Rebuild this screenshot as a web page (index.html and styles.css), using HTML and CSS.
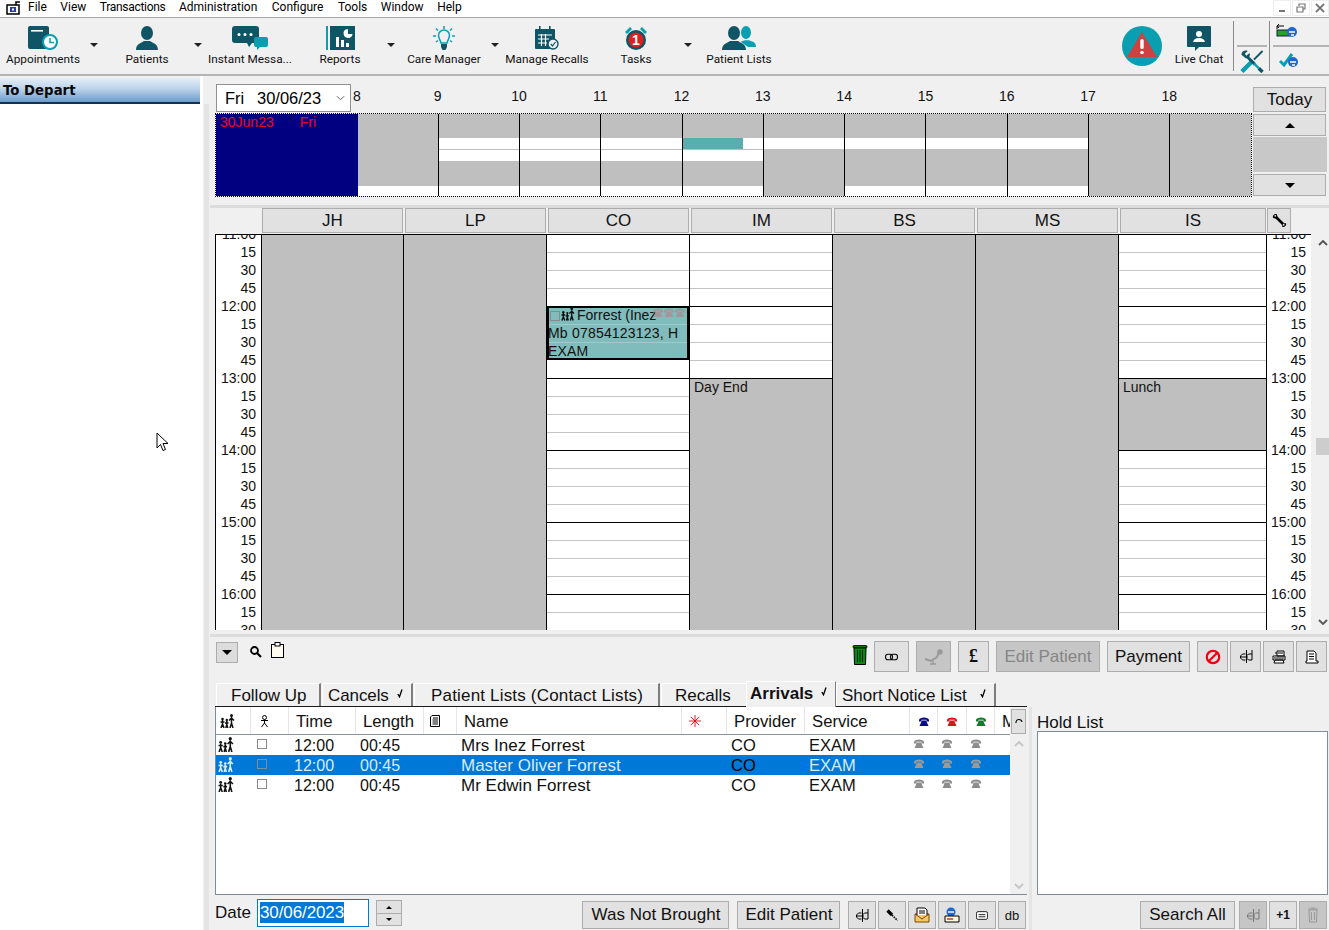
FILE: index.html
```html
<!DOCTYPE html>
<html lang="en">
<head>
<meta charset="utf-8">
<title>Appointments</title>
<link rel="stylesheet" href="styles.css">
</head>
<body>
<svg class="defs" width="0" height="0">
  <symbol id="family" viewBox="0 0 15 14">
    <g fill="currentColor" stroke="currentColor" stroke-width="1.500">
      <circle cx="2.500" cy="5" r="1.300" stroke="none"/><path d="M.5 8 4.500 8M2.500 6v4M1 14 2.500 10 4 14" fill="none"/>
      <circle cx="6.800" cy="6" r="1.200" stroke="none"/><path d="M5 9 8.500 9M6.800 7v3.500M5.800 14 6.800 10.500 7.800 14" fill="none"/>
      <circle cx="11.500" cy="1.500" r="1.500" stroke="none"/><path d="M9 6.500 11.500 4 14 6.500M11.500 3v6M10 14 11.500 9 13 14" fill="none"/>
    </g>
  </symbol>
  <symbol id="phone" viewBox="0 0 10 9">
    <path fill="currentColor" d="M0 3C0-.4 10-.4 10 3V4.500H7.500V2.800H2.500V4.500H0ZM3 3.500H7L9.500 9H.5Z"/>
  </symbol>
  <symbol id="split" viewBox="0 0 14 15">
    <path fill="none" stroke="#000" d="M7.500 1V14M1.500 8H7M6.500 5H3.500L1.500 7V9L3.500 11H6.500M13 1V11H9.500L8 9.500V6.500L9.500 5H13"/>
  </symbol>
  <symbol id="up" viewBox="0 0 10 6"><path fill="none" stroke="currentColor" stroke-width="1.800" d="M1 5 5 1 9 5"/></symbol>
  <symbol id="down" viewBox="0 0 10 6"><path fill="none" stroke="currentColor" stroke-width="1.800" d="M1 1 5 5 9 1"/></symbol>
  <symbol id="tick" viewBox="0 0 6 9"><path fill="none" stroke="#000" stroke-width="1.300" d="M.8 5 2.500 7.800 5 .5"/></symbol>
</svg>

<header class="menubar">
  <svg class="app-icon" viewBox="0 0 16 14" width="16" height="14"><path fill="none" stroke="#000" stroke-width="1.500" d="M2 13H14V4H2ZM11 4V1H15"/><rect x="5" y="6" width="6" height="5" fill="#2a3f9c"/><rect x="7" y="7.500" width="2" height="2" fill="#fff"/></svg>
  <nav class="menu">
    <span>File</span><span>View</span><span class="menu-narrow">Transactions</span><span>Administration</span><span class="menu-nudge">Configure</span><span class="menu-nudge">Tools</span><span>Window</span><span>Help</span>
  </nav>
  <div class="winctl">
    <span class="winbtn"><svg viewBox="0 0 10 10" width="10" height="10"><rect x="2" y="7" width="6" height="2" fill="#777"/></svg></span>
    <span class="winbtn"><svg viewBox="0 0 10 10" width="10" height="10"><path fill="none" stroke="#777" stroke-width="1.200" d="M1 4H7V9H1ZM3 3V1H9V6H7.500"/></svg></span>
    <span class="winbtn"><svg viewBox="0 0 10 10" width="10" height="10"><path fill="none" stroke="#777" stroke-width="1.800" d="M1 1 9 9M9 1 1 9"/></svg></span>
  </div>
</header>

<section class="toolbar">
  <div class="tool">
    <svg class="ti" viewBox="0 0 30 24" width="30" height="24"><rect width="21" height="23" rx="2" fill="#0f5566"/><rect x="3" y="4" width="12" height="1.600" fill="#fff"/><circle cx="22" cy="16" r="7" fill="#fff" stroke="#0a9fb0" stroke-width="2"/><path d="M22 12v4.500h4" fill="none" stroke="#0a9fb0" stroke-width="1.500"/></svg>
    <span>Appointments</span>
  </div>
  <i class="caret"></i>
  <div class="tool">
    <svg class="ti" viewBox="0 0 22 24" width="22" height="24"><ellipse cx="11" cy="7" rx="6" ry="7" fill="#0f5566"/><path d="M0 24C0 18 5 17 8 15H14C17 17 22 18 22 24Z" fill="#0f5566"/></svg>
    <span>Patients</span>
  </div>
  <i class="caret"></i>
  <div class="tool">
    <svg class="ti" viewBox="0 0 36 24" width="36" height="24"><path d="M3 0H24Q27 0 27 3V14Q27 17 24 17H20L17 21 15 17H3Q0 17 0 14V3Q0 0 3 0Z" fill="#0f5566"/><g fill="#fff"><circle cx="7" cy="8.500" r="1.500"/><circle cx="13" cy="8.500" r="1.500"/><circle cx="19" cy="8.500" r="1.500"/></g><path d="M24 11H34Q36 11 36 13V19Q36 21 34 21H28L25 24V21H24Q22 21 22 19V13Q22 11 24 11Z" fill="#0a9fb0"/></svg>
    <span>Instant Messa...</span>
  </div>
  <div class="tool">
    <svg class="ti" viewBox="0 0 29 24" width="29" height="24"><rect width="2" height="24" fill="#0a9fb0"/><rect x="4" width="25" height="24" fill="#0f5566"/><g fill="#fff"><rect x="10" y="11" width="3" height="10"/><rect x="15" y="14" width="3" height="7"/><rect x="20" y="17" width="3" height="4"/><path d="M21 3A4.500 4.500 0 1 0 26.500 8H22V3.500Z"/></g></svg>
    <span>Reports</span>
  </div>
  <i class="caret"></i>
  <div class="tool">
    <svg class="ti" viewBox="0 0 22 24" width="22" height="24"><g fill="none" stroke="#0a9fb0" stroke-width="1.500"><path d="M8 17C7 13 5.500 12.500 5.500 9.500A5.500 5.500 0 0 1 16.500 9.500C16.500 12.500 15 13 14 17Z"/><path d="M11 0V3M3 2.500 5 4.500M19 2.500 17 4.500M0 10H3M19 10H22M3 16 5 14.500M19 16 17 14.500"/></g><path d="M8 18H14V21L12.500 24H9.500L8 21Z" fill="#0f5566"/></svg>
    <span>Care Manager</span>
  </div>
  <i class="caret"></i>
  <div class="tool">
    <svg class="ti" viewBox="0 0 24 24" width="24" height="24"><rect y="3" width="20" height="20" rx="1" fill="#0f5566"/><rect x="4" y="0" width="1.600" height="5" fill="#0f5566"/><rect x="14" y="0" width="1.600" height="5" fill="#0f5566"/><path d="M3 9H17M3 13H14M3 17H12M6.500 8V20M10.500 8V20" stroke="#fff" stroke-width="1.200"/><circle cx="18" cy="18" r="5" fill="#f0f0f0" stroke="#0f5566" stroke-width="1.400"/><path d="M15.800 18 17.500 20 20.500 16" fill="none" stroke="#0f5566" stroke-width="1.200"/></svg>
    <span>Manage Recalls</span>
  </div>
  <div class="tool">
    <svg class="ti" viewBox="0 0 24 26" width="24" height="26"><path d="M1 6 6 1 8 3 3 8ZM23 6 18 1 16 3 21 8Z" fill="#0a9fb0"/><circle cx="12" cy="14" r="10" fill="#0f5566"/><circle cx="12" cy="14" r="7.500" fill="#e02020"/><text x="12" y="19" class="tnum">1</text></svg>
    <span>Tasks</span>
  </div>
  <i class="caret"></i>
  <div class="tool">
    <svg class="ti" viewBox="0 0 34 24" width="34" height="24"><ellipse cx="24" cy="6.500" rx="5" ry="6.500" fill="#0a9fb0"/><path d="M19 16C20 14 28 14 29 15 32 16 34 17 34 21H26Z" fill="#0a9fb0"/><ellipse cx="12" cy="7" rx="6" ry="7" fill="#0f5566"/><path d="M0 24C0 18 5 17 8 15H16C19 17 24 18 24 24Z" fill="#0f5566"/></svg>
    <span>Patient Lists</span>
  </div>
  <div class="tool-fill"></div>
  <svg class="alert" viewBox="0 0 40 40" width="40" height="40"><circle cx="20" cy="20" r="20" fill="#0a9fb0"/><path d="M20 6 35 31H5Z" fill="#cf4040"/><rect x="18.300" y="13" width="3.400" height="10" rx="1.500" fill="#fff"/><circle cx="20" cy="26.500" r="1.800" fill="#fff"/></svg>
  <div class="tool">
    <svg class="ti" viewBox="0 0 24 26" width="24" height="26"><path d="M1 0H23Q24 0 24 1V20Q24 21 23 21H12L8 25V21H1Q0 21 0 20V1Q0 0 1 0Z" fill="#0f5566"/><circle cx="12" cy="8" r="3" fill="#fff"/><path d="M6 16Q7 12 12 12T18 16Z" fill="#fff"/></svg>
    <span>Live Chat</span>
  </div>
  <div class="vrule"></div>
  <div class="toolstack">
    <div class="stack-slot"></div>
    <div class="stack-slot ruled">
      <svg viewBox="0 0 24 24" width="24" height="23"><path d="M23 1 14 10" stroke="#0f5566" stroke-width="2"/><path d="M1.500 22.500 13 11" stroke="#0a9fb0" stroke-width="4.500"/><path d="M1 5C1 1 5 0 7.500 1L4.500 4 6 6 9.500 3C10.500 6 8.500 9.500 5.500 8.500Z" fill="#0f5566"/><path d="M7 7 15 15" stroke="#0f5566" stroke-width="3"/><path d="M14 14 19 19" stroke="#0a9fb0" stroke-width="2.500"/><path d="M19 19 23 23" stroke="#0f5566" stroke-width="3.500"/></svg>
    </div>
  </div>
  <div class="vrule"></div>
  <div class="toolstack">
    <div class="stack-slot">
      <svg viewBox="0 0 22 15" width="22" height="15"><path d="M8 3H1M3 1 1 3 3 5M1 3V6" fill="none" stroke="#000"/><rect x="1" y="7" width="13" height="6" fill="#2f9a2f" stroke="#123"/><circle cx="16" cy="9" r="5" fill="#1f66d0"/><path d="M13 9H19M18 12H15" stroke="#fff" stroke-width="1.400"/></svg>
    </div>
    <div class="stack-slot ruled">
      <svg viewBox="0 0 20 16" width="20" height="16"><path d="M1 9 5 13 13 2" fill="none" stroke="#0a9fb0" stroke-width="3"/><circle cx="14" cy="10" r="5" fill="#1f66d0"/><path d="M11 10H17M16 13H13" stroke="#fff" stroke-width="1.400"/></svg>
    </div>
  </div>
</section>

<div class="workspace">
  <aside class="sidebar">
    <div class="side-head">To Depart</div>
  </aside>
  <div class="side-split"></div>

  <main class="main">
    <div class="head">
      <div>
        <div class="hours">
          <div class="combo"><span class="combo-day">Fri</span><span>30/06/23</span><svg class="combo-arrow" viewBox="0 0 10 6" width="9" height="6"><path d="M1 1 5 5 9 1" fill="none" stroke="#555"/></svg></div>
          <span class="hour first">8</span><span class="hour">9</span><span class="hour">10</span><span class="hour">11</span><span class="hour">12</span><span class="hour">13</span><span class="hour">14</span><span class="hour">15</span><span class="hour">16</span><span class="hour">17</span><span class="hour">18</span>
        </div>
        <div class="strip">
          <div class="strip-date"><span>30Jun23</span><span>Fri</span></div>
          <div class="sc closed-bottom-open"></div>
          <div class="sc line open-a"></div>
          <div class="sc line open-a"></div>
          <div class="sc line open-a"></div>
          <div class="sc line open-b"></div>
          <div class="sc line open-c"></div>
          <div class="sc line open-d"></div>
          <div class="sc line open-d"></div>
          <div class="sc line open-d"></div>
          <div class="sc line"></div>
          <div class="sc line"></div>
        </div>
      </div>
      <div class="navcol">
        <div class="btn today">Today</div>
        <div class="btn nav"><i class="tri-up"></i></div>
        <div class="navgap"></div>
        <div class="btn nav"><i class="tri-down"></i></div>
      </div>
    </div>

    <div class="hsep"></div>

    <div class="providers">
      <div class="btn prov">JH</div><div class="btn prov">LP</div><div class="btn prov">CO</div><div class="btn prov">IM</div><div class="btn prov">BS</div><div class="btn prov">MS</div><div class="btn prov prov-last">IS</div>
      <div class="btn prov-tool"><svg viewBox="0 0 16 16" width="15" height="15"><path d="M1 3 3 1 5 1 6 4 13 11 15 11 15 13 13 15 11 15 11 13 4 6 1 5Z" fill="#000"/><circle cx="3.500" cy="3" r="1" fill="#e1e1e1"/><circle cx="12.500" cy="12.500" r="1" fill="#e1e1e1"/></svg></div>
    </div>

    <div class="sched">
      <div class="sgrid">
        <div class="times left">
          <span>11:00</span><span>15</span><span>30</span><span>45</span><span>12:00</span><span>15</span><span>30</span><span>45</span><span>13:00</span><span>15</span><span>30</span><span>45</span><span>14:00</span><span>15</span><span>30</span><span>45</span><span>15:00</span><span>15</span><span>30</span><span>45</span><span>16:00</span><span>15</span><span>30</span>
        </div>
        <div class="col closed"></div>
        <div class="col closed"></div>
        <div class="col">
          <div class="seg h72"></div>
          <div class="apt">
            <div class="apt-row tight"><i class="chk"></i><svg class="apt-fam" width="14" height="14"><use href="#family"/></svg><span>Forrest (Inez</span>
              <span class="apt-ph"><svg width="10" height="9"><use href="#phone"/></svg><svg width="10" height="9"><use href="#phone"/></svg><svg width="10" height="9"><use href="#phone"/></svg></span>
            </div>
            <div class="apt-row">Mb 07854123123, H</div>
            <div class="apt-row">EXAM</div>
          </div>
          <div class="seg after-apt"></div>
          <div class="seg grow"></div>
        </div>
        <div class="col">
          <div class="seg h144"></div>
          <div class="block grow">Day End</div>
        </div>
        <div class="col closed"></div>
        <div class="col closed"></div>
        <div class="col">
          <div class="seg h144"></div>
          <div class="block h72">Lunch</div>
          <div class="seg grow"></div>
        </div>
        <div class="times right">
          <span>11:00</span><span>15</span><span>30</span><span>45</span><span>12:00</span><span>15</span><span>30</span><span>45</span><span>13:00</span><span>15</span><span>30</span><span>45</span><span>14:00</span><span>15</span><span>30</span><span>45</span><span>15:00</span><span>15</span><span>30</span><span>45</span><span>16:00</span><span>15</span><span>30</span>
        </div>
      </div>
      <div class="vscroll">
        <svg class="chev" width="10" height="6"><use href="#up"/></svg>
        <div class="thumb"></div>
        <svg class="chev chev-end" width="10" height="6"><use href="#down"/></svg>
      </div>
    </div>

    <div class="hsep lower-sep"></div>

    <div class="actions">
      <div class="btn dropbtn"><i class="tri-down"></i></div>
      <svg class="act-search" viewBox="0 0 12 12" width="12" height="12"><circle cx="4.500" cy="4.500" r="3.500" fill="none" stroke="#000" stroke-width="1.800"/><path d="M7 7 11 11" stroke="#000" stroke-width="2.200"/></svg>
      <svg class="act-clip" viewBox="0 0 13 16" width="13" height="16"><rect x=".5" y="2.500" width="12" height="13" fill="#fffdf0" stroke="#000"/><rect x="4" y=".5" width="5" height="3.500" fill="#fff" stroke="#000"/></svg>
      <div class="act-fill"></div>
      <svg class="act-trash" viewBox="0 0 16 21" width="16" height="21"><rect x="1" y="1.500" width="14" height="2.500" rx="1" fill="#0a7a0a" stroke="#000" stroke-width=".8"/><path d="M2 4H14L13.500 20.500H2.500Z" fill="#0a8a0a" stroke="#000"/><path d="M5.500 6V18M8 6V18M10.500 6V18" stroke="#023" stroke-width="1"/></svg>
      <div class="btn act w35"><svg viewBox="0 0 14 8" width="13" height="8"><g fill="none" stroke="#000" stroke-width="1.100"><rect x=".6" y="1" width="7.400" height="6" rx="2.500"/><rect x="6" y="1" width="7.400" height="6" rx="2.500"/></g></svg></div>
      <div class="btn act w35 off"><svg viewBox="0 0 20 16" width="20" height="16"><path d="M1 10 7 12 13 8 15 3" fill="none" stroke="#999" stroke-width="2"/><circle cx="16" cy="3" r="2.800" fill="#999"/><path d="M9 12V15M6 15H12" stroke="#999" stroke-width="1.300"/></svg></div>
      <div class="btn act w31 pound">£</div>
      <div class="btn act w104 off">Edit Patient</div>
      <div class="btn act w83">Payment</div>
      <div class="btn act w31 first-ico"><svg viewBox="0 0 16 16" width="16" height="16"><circle cx="8" cy="8" r="6.200" fill="none" stroke="#f00012" stroke-width="2.200"/><path d="M4 12 12 4" stroke="#f00012" stroke-width="2.200"/></svg></div>
      <div class="btn act w31 ico"><svg width="14" height="15"><use href="#split"/></svg></div>
      <div class="btn act w31 ico"><svg viewBox="0 0 14 14" width="14" height="14"><path d="M5 1H12V6H5ZM3 3H5M1 6H13V10H1ZM3 10H11L12 13H2Z" fill="#fff" stroke="#000"/><path d="M6 3H11M2 8H12" stroke="#000"/></svg></div>
      <div class="btn act w31 ico"><svg viewBox="0 0 14 14" width="14" height="14"><path d="M2 1H9L11 3V11H13V13H1V11H2ZM4 4H9M4 6.500H9M4 9H9" fill="#fff" stroke="#000"/></svg></div>
    </div>

    <div class="lower">
      <div class="lower-left">
        <div class="tabs">
          <div class="tab t1">Follow Up</div>
          <div class="tab t2">Cancels<svg class="tk" width="6" height="9"><use href="#tick"/></svg></div>
          <div class="tab t3">Patient Lists (Contact Lists)</div>
          <div class="tab t4">Recalls</div>
          <div class="tab t5 active">Arrivals<svg class="tk" width="6" height="9"><use href="#tick"/></svg></div>
          <div class="tab t6">Short Notice List<svg class="tk" width="6" height="9"><use href="#tick"/></svg></div>
        </div>
        <div class="table">
          <div class="tbody">
            <div class="cols thead">
              <div class="th"><svg width="15" height="14"><use href="#family"/></svg></div>
              <div class="th th-ico"><svg viewBox="0 0 9 12" width="9" height="12"><g fill="none" stroke="#000"><circle cx="4.500" cy="2.500" r="2"/><path d="M1 5.500H8M4.500 4.500V8M1.500 12 4.500 8 7.500 12"/></g></svg></div>
              <div class="th">Time</div>
              <div class="th">Length</div>
              <div class="th th-note"><svg viewBox="0 0 10 12" width="10" height="12"><path d="M2 .5H9.500V11.500H.5V2ZM3 3H8M2.500 5H8M2.500 7H8M2.500 9H8" fill="#fff" stroke="#000"/></svg></div>
              <div class="th">Name</div>
              <div class="th th-star"><svg viewBox="0 0 12 12" width="12" height="12"><path d="M6 0V12M0 6H12M1.800 1.800 10.200 10.200M1.800 10.200 10.200 1.800" stroke="#f00012" stroke-width=".9"/></svg></div>
              <div class="th">Provider</div>
              <div class="th">Service</div>
              <div class="th th-ph c-navy"><svg width="10" height="9"><use href="#phone"/></svg></div>
              <div class="th th-ph c-red"><svg width="10" height="9"><use href="#phone"/></svg></div>
              <div class="th th-ph c-green"><svg width="10" height="9"><use href="#phone"/></svg></div>
              <div class="th th-clip">M</div>
            </div>
            <div class="cols tr">
              <div class="td td-fam"><svg width="16" height="15"><use href="#family"/></svg></div>
              <div class="td td-chk"><i class="chk"></i></div>
              <div class="td td-time">12:00</div>
              <div class="td td-len">00:45</div>
              <div class="td"></div>
              <div class="td td-name">Mrs Inez Forrest</div>
              <div class="td"></div>
              <div class="td td-code">CO</div>
              <div class="td td-code">EXAM</div>
              <div class="td td-ph"><svg width="10" height="9"><use href="#phone"/></svg></div>
              <div class="td td-ph"><svg width="10" height="9"><use href="#phone"/></svg></div>
              <div class="td td-ph"><svg width="10" height="9"><use href="#phone"/></svg></div>
              <div class="td"></div>
            </div>
            <div class="cols tr selected">
              <div class="td td-fam"><svg width="16" height="15"><use href="#family"/></svg></div>
              <div class="td td-chk"><i class="chk"></i></div>
              <div class="td td-time">12:00</div>
              <div class="td td-len">00:45</div>
              <div class="td"></div>
              <div class="td td-name">Master Oliver Forrest</div>
              <div class="td"></div>
              <div class="td td-code dark">CO</div>
              <div class="td td-code">EXAM</div>
              <div class="td td-ph"><svg width="10" height="9"><use href="#phone"/></svg></div>
              <div class="td td-ph"><svg width="10" height="9"><use href="#phone"/></svg></div>
              <div class="td td-ph"><svg width="10" height="9"><use href="#phone"/></svg></div>
              <div class="td"></div>
            </div>
            <div class="cols tr">
              <div class="td td-fam"><svg width="16" height="15"><use href="#family"/></svg></div>
              <div class="td td-chk"><i class="chk"></i></div>
              <div class="td td-time">12:00</div>
              <div class="td td-len">00:45</div>
              <div class="td"></div>
              <div class="td td-name">Mr Edwin Forrest</div>
              <div class="td"></div>
              <div class="td td-code">CO</div>
              <div class="td td-code">EXAM</div>
              <div class="td td-ph"><svg width="10" height="9"><use href="#phone"/></svg></div>
              <div class="td td-ph"><svg width="10" height="9"><use href="#phone"/></svg></div>
              <div class="td td-ph"><svg width="10" height="9"><use href="#phone"/></svg></div>
              <div class="td"></div>
            </div>
          </div>
          <div class="tscroll">
            <div class="btn refresh"><svg viewBox="0 0 8 9" width="8" height="9"><path d="M1 6A3 3 0 1 1 7 5" fill="none" stroke="#000" stroke-width="1.100"/></svg></div>
            <svg class="tchev" width="10" height="6"><use href="#up"/></svg>
            <svg class="tchev tchev-end" width="10" height="6"><use href="#down"/></svg>
          </div>
        </div>
        <div class="bottom">
          <span class="date-label">Date</span>
          <div class="date-input"><span class="sel">30/06/2023</span></div>
          <div class="spin"><span><i class="tri-up small"></i></span><span><i class="tri-down small"></i></span></div>
          <div class="act-fill"></div>
          <div class="btn bb w147">Was Not Brought</div>
          <div class="btn bb w103">Edit Patient</div>
          <div class="btn bb sq"><svg width="14" height="15"><use href="#split"/></svg></div>
          <div class="btn bb sq"><svg viewBox="0 0 14 14" width="14" height="14"><path d="M2.500 2.500 7 7" stroke="#000" stroke-width="3.200"/><path d="M7 7 12.500 12.500" stroke="#000" stroke-width="1.600" stroke-dasharray="1.500 1"/></svg></div>
          <div class="btn bb sq"><svg viewBox="0 0 16 16" width="16" height="16"><path d="M1 7H15V15H1Z" fill="#f5c860" stroke="#7a4a00"/><path d="M3 8V1H11L13 3V8" fill="#fff" stroke="#000"/><path d="M5 4H11M5 6H11" stroke="#000"/><path d="M1 7 8 12 15 7" fill="none" stroke="#7a4a00"/></svg></div>
          <div class="btn bb sq"><svg viewBox="0 0 16 16" width="16" height="16"><circle cx="7" cy="5" r="4.500" fill="#1f66d0"/><path d="M4 5H10" stroke="#fff" stroke-width="1.400"/><path d="M1 9H15V15H1Z" fill="#fff6d8" stroke="#000"/><path d="M3 12H9" stroke="#d03030" stroke-width="1.500"/></svg></div>
          <div class="btn bb sq"><svg viewBox="0 0 14 10" width="12" height="9"><rect x=".5" y=".5" width="13" height="9" rx="2" fill="#fff" stroke="#000"/><path d="M3 4H11M3 6.500H11" stroke="#000"/></svg></div>
          <div class="btn bb sq small-txt">db</div>
        </div>
      </div>
      <div class="vsplit"></div>
      <div class="lower-right">
        <div class="hold-label">Hold List</div>
        <div class="hold-box"></div>
        <div class="bottom">
          <div class="act-fill"></div>
          <div class="btn bb w95">Search All</div>
          <div class="btn bb sq off"><svg class="faded" width="14" height="15"><use href="#split"/></svg></div>
          <div class="btn bb sq plus-txt">+1</div>
          <div class="btn bb sq off"><svg viewBox="0 0 12 16" width="12" height="16"><path d="M1 2H11M4 1H8M2 3H10L9.500 15H2.500Z" fill="none" stroke="#999"/><path d="M4.500 5V13M7.500 5V13" stroke="#999"/></svg></div>
        </div>
      </div>
    </div>
  </main>
</div>

<svg class="cursor" viewBox="0 0 13 20" width="13" height="20"><path d="M1 1V16L4.500 12.500 7 18.500 9.500 17.500 7 11.500H12Z" fill="#fff" stroke="#000"/></svg>
</body>
</html>
```

FILE: styles.css
```css
* { box-sizing: border-box; }
html, body { margin: 0; padding: 0; }
body {
  width: 1329px;
  height: 930px;
  overflow: hidden;
  position: relative;
  background: #f0f0f0;
  font-family: "Liberation Sans", Arial, sans-serif;
  font-size: 16px;
  color: #000;
}
.defs { position: absolute; }
i { display: block; }

/* menu */
.menubar {
  height: 18px;
  background: #fff;
  border-bottom: 1px solid #a8a8a8;
  display: flex;
  align-items: flex-start;
  font-family: Roboto, sans-serif;
  font-size: 12px;
  line-height: 14px;
}
.app-icon { margin: 1px 0 0 5px; flex: none; }
.menu { display: flex; gap: 13.500px; margin-left: 7px; }
.menu-narrow { letter-spacing: -.3px; }
.menu-nudge { margin-left: 1px; }
.winctl { margin-left: auto; display: flex; gap: 1px; height: 16px; }
.winbtn {
  width: 18px;
  height: 16px;
  border: 1px solid #eee;
  display: flex;
  align-items: center;
  justify-content: center;
}

/* main toolbar */
.toolbar {
  height: 58px;
  background: #f0f0f0;
  border-bottom: 2px solid #b4b4b4;
  display: grid;
  grid-template-columns: 86px 16px 90px 12px 92px 88px 14px 92px 10px 94px 84px 20px 82px 1fr 43px 68px 1px 35px 1px 59px;
  align-items: start;
  font-family: Roboto, sans-serif;
  font-size: 11.800px;
}
.tool {
  display: flex;
  flex-direction: column;
  align-items: center;
  height: 48px;
  padding-top: 8px;
  white-space: nowrap;
  color: #111;
}
.tool .ti { flex: none; }
.tool span { line-height: 14px; margin-top: auto; }
.caret {
  width: 0; height: 0;
  margin: 25px auto 0;
  border-left: 4px solid transparent;
  border-right: 4px solid transparent;
  border-top: 4px solid #222;
}
.alert { margin-top: 8px; }
.vrule { width: 1px; height: 50px; margin-top: 3px; background: #8a8a8a; }
.toolstack { display: flex; flex-direction: column; height: 54px; margin-top: 3px; }
.stack-slot { height: 24px; padding: 2px 0 0 6px; }
.stack-slot.ruled { border-top: 2px solid #b4b4b4; padding: 3px 0 0 3px; margin-left: 3px; height: 30px; margin-right: 2px; }
.toolstack:last-child .stack-slot.ruled { margin-right: 0; padding: 5px 0 0 6px; }

/* workspace */
.workspace { display: flex; height: 854px; }
.sidebar { width: 203px; background: #fff; flex: none; }
.side-head {
  width: 200px;
  height: 28px;
  border-top: 2px solid #f0f0f0;
  border-bottom: 2px solid #16324f;
  padding-left: 3px;
  background: linear-gradient(#e4eef7, #bcd3ea 45%, #6c9bcb);
  font-family: "DejaVu Sans", sans-serif;
  font-weight: bold;
  font-size: 13.300px;
  line-height: 26px;
  color: #0a0a0a;
}
.side-split {
  width: 7px;
  flex: none;
  margin-top: 28px;
  background: linear-gradient(90deg, #f0f0f0 1px, #e4e4e4 1px, #e4e4e4 6px, #f0f0f0 6px);
}
.main { width: 1119px; flex: none; }

/* day overview */
.head { display: flex; gap: 1px; margin: 8px 0 0 5px; }
.hours { display: flex; height: 29px; }
.combo {
  width: 135px;
  height: 28px;
  margin-left: 1px;
  border: 1px solid #909090;
  background: #fff;
  display: flex;
  align-items: center;
  padding-left: 8px;
  font-size: 16.500px;
  flex: none;
}
.combo-day { width: 32px; }
.combo-arrow { margin-left: 15px; }
.hour { width: 81.300px; text-align: center; font-size: 14px; line-height: 24px; flex: none; color: #111; }
.hour.first { width: 46px; text-align: left; padding-left: 2px; }
.strip {
  width: 1037px;
  height: 84px;
  border: 1px dotted #000;
  display: grid;
  grid-template-columns: 142px 80px 81px 81px 82px 81px 81px 81px 82px 81px 81px 82px;
}
.strip-date {
  background: #000080;
  color: #f00020;
  font-size: 14px;
  line-height: 16px;
  padding: 0 0 0 4px;
  display: flex;
  gap: 26px;
}
.sc { background: #bfbfbf; }
.sc.line { border-left: 1px solid #000; }
.closed-bottom-open { background: linear-gradient(#bfbfbf 72px, #fff 72px); }
.open-a { background: linear-gradient(#bfbfbf 24px, #fff 24px, #fff 35px, #bfbfbf 35px, #bfbfbf 36px, #fff 36px, #fff 47px, #bfbfbf 47px, #bfbfbf 72px, #fff 72px); }
.open-b { background: linear-gradient(#bfbfbf 24px, #5aaeb0 24px, #5aaeb0 35px, #bfbfbf 35px, #bfbfbf 36px, transparent 36px) 0 0 / 60px 100% no-repeat, linear-gradient(#bfbfbf 24px, #fff 24px, #fff 35px, #bfbfbf 35px, #bfbfbf 36px, #fff 36px, #fff 47px, #bfbfbf 47px, #bfbfbf 72px, #fff 72px); }
.open-c { background: linear-gradient(#bfbfbf 24px, #fff 24px, #fff 35px, #bfbfbf 35px); }
.open-d { background: linear-gradient(#bfbfbf 24px, #fff 24px, #fff 35px, #bfbfbf 35px, #bfbfbf 72px, #fff 72px); }

.navcol { width: 73px; padding-top: 3px; display: flex; flex-direction: column; }
.btn {
  background: #e1e1e1;
  border: 1px solid #adadad;
  display: flex;
  align-items: center;
  justify-content: center;
  flex: none;
  white-space: nowrap;
}
.today { height: 25px; font-size: 17px; color: #111; }
.nav { height: 22px; }
.navcol .btn:nth-child(2) { margin-top: 2px; }
.navgap { height: 35px; margin: 1px 0 2px; background: #c8c8c8; width: 74px; }
.tri-up, .tri-down {
  width: 0; height: 0;
  border-left: 5px solid transparent;
  border-right: 5px solid transparent;
}
.tri-up { border-bottom: 5px solid #000; }
.tri-down { border-top: 5px solid #000; }
.tri-up.small, .tri-down.small { border-left-width: 3px; border-right-width: 3px; }
.tri-up.small { border-bottom-width: 3px; }
.tri-down.small { border-top-width: 3px; }

.hsep { height: 3px; margin-top: 8px; background: #dcdcdc; }
.lower-sep { margin-top: 4px; }

/* provider headers */
.providers { display: flex; gap: 2px; height: 25px; margin: 0 0 1px 52px; }
.prov { width: 141px; height: 25px; font-size: 17px; color: #111; }
.prov-last { width: 146px; }
.prov-tool { width: 24px; height: 25px; margin-left: -1px; }

/* schedule */
.sched { display: flex; margin-left: 5px; height: 396px; }
.sgrid {
  width: 1096px;
  height: 396px;
  flex: none;
  display: grid;
  grid-template-columns: 46px 142px 143px 143px 143px 143px 143px 148px 45px;
  overflow: hidden;
}
.times {
  background: #fff;
  box-shadow: inset 0 1px #000;
  overflow: hidden;
  display: flex;
  flex-direction: column;
  align-items: flex-end;
  font-size: 14px;
  color: #111;
}
.times span { height: 18px; line-height: 18px; flex: none; position: relative; top: -9px; }
.times.left { border-left: 1px solid #000; padding-right: 5px; }
.times.right { border-left: 1px solid #000; padding-right: 5px; }
.col {
  border-left: 1px solid #000;
  display: flex;
  flex-direction: column;
  min-height: 0;
  overflow: hidden;
}
.col.closed { background: linear-gradient(#000 1px, #bfbfbf 1px); }
.seg {
  flex: none;
  background:
    linear-gradient(#000 1px, transparent 1px) 0 0 / 100% 72px,
    linear-gradient(#c4c4c4 1px, transparent 1px) 0 0 / 100% 18px,
    #fff;
}
.h72 { height: 72px; flex: none; }
.h144 { height: 144px; }
.grow { flex: 1; }
.after-apt { height: 18px; background: #fff; }
.block {
  background: linear-gradient(#000 1px, #bfbfbf 1px);
  font-size: 14px;
  line-height: 18px;
  padding-left: 4px;
  color: #111;
}
.apt {
  flex: none;
  height: 54px;
  border: 2px solid #000;
  background: #80bcbc;
  font-size: 14px;
  letter-spacing: .2px;
  line-height: 16px;
  color: #111;
  overflow: hidden;
}
.apt-row {
  height: 18px;
  margin-left: -1px;
  padding-bottom: 1px;
  border-bottom: 1px solid #9ccccc;
  white-space: nowrap;
  display: flex;
  align-items: center;
  position: relative;
}
.apt-row.tight { height: 17px; padding-bottom: 2px; letter-spacing: 0; }
.apt-row:last-child { border-bottom: 0; height: 17px; padding-bottom: 2px; }
.chk {
  width: 10px;
  height: 10px;
  border: 1px solid #8a8a8a;
  flex: none;
}
.apt .chk { margin: 1px 1px 0 2px; }
.apt-fam { margin: -3px 2px 0 0; flex: none; }
.apt-ph {
  position: absolute;
  right: 2px;
  top: 0;
  display: flex;
  gap: 1px;
  color: #9a9a9a;
}
.vscroll { width: 13px; margin-left: 5px; display: flex; flex-direction: column; align-items: center; background: #f0f0f0; }
.chev { margin-top: 6px; color: #555; flex: none; }
.thumb { width: 13px; height: 17px; background: #cdcdcd; margin-top: 192px; flex: none; }
.chev-end { margin-top: auto; margin-bottom: 5px; }

/* action row */
.actions { display: flex; align-items: flex-start; height: 31px; margin: 4px 0 0 6px; padding-right: 2px; }
.dropbtn { width: 22px; height: 21px; margin-top: 1px; background: #dcdcdc; }
.act-search { margin: 5px 0 0 12px; }
.act-clip { margin: 1px 0 0 9px; }
.act-fill { flex: 1; }
.act-trash { margin: 3px 6px 0 0; }
.act { height: 31px; margin-left: 7px; font-size: 17px; color: #111; }
.act-trash + .act { margin-left: 0; }
.w35 { width: 35px; }
.w31 { width: 31px; }
.w104 { width: 104px; }
.w83 { width: 83px; }
.ico { margin-left: 2px; }
.pound { font-family: "Liberation Serif", serif; font-weight: bold; font-size: 18px; }
.off { background: #c6c6c6; color: #858585; }

/* lower panels */
.lower { display: flex; margin: 11px 0 0 5px; }
.lower-left { width: 812px; flex: none; }
.lower-right { width: 291px; margin-left: 2px; flex: none; }
.vsplit { width: 8px; margin-top: 24px; background: linear-gradient(90deg, #f0f0f0 2px, #e4e4e4 2px, #e4e4e4 5px, #f0f0f0 5px); height: 223px; flex: none; }

.tabs {
  display: flex;
  height: 24px;
  padding-left: 1px;
  border-bottom: 1px solid #1a1a1a;
  font-size: 17px;
  color: #111;
}
.tab {
  height: 23px;
  background: #f0f0f0;
  border-top: 1px solid #fff;
  border-left: 1px solid #fff;
  border-right: 2px solid #7d7d7d;
  display: flex;
  align-items: center;
  white-space: nowrap;
  line-height: 23px;
  flex: none;
}
.t1 { width: 105px; margin-right: 1px; padding-left: 14px; }
.t2 { width: 91px; margin-right: 1px; padding-left: 5px; letter-spacing: -.1px; }
.t3 { width: 246px; margin-right: 1px; padding-left: 16px; letter-spacing: .18px; }
.t4 { width: 85px; padding-left: 13px; border-right: 0; }
.t5 { width: 90px; padding-left: 3px; }
.t6 { width: 160px; padding-left: 5px; }
.tk { margin-left: 8px; flex: none; margin-top: -4px; }
.t6 .tk { margin-left: 13px; }
.tab.active {
  height: 26px;
  margin-top: -2px;
  font-weight: bold;
  position: relative;
  align-items: flex-start;
  border-right-width: 1px;
  line-height: 24px;
}
.tab.active .tk { margin-top: 5px; }

.table {
  height: 188px;
  display: flex;
  border-left: 1px solid #7f8c99;
  border-bottom: 1px solid #7f8c99;
  background: #fff;
}
.tbody { width: 794px; flex: none; }
.cols {
  display: grid;
  grid-template-columns: 35px 38px 67px 68px 33px 225px 45px 78px 105px 28px 29px 28px 15px;
}
.thead {
  height: 28px;
  border-bottom: 1px solid #8a94a0;
  font-size: 16.700px;
  color: #111;
}
.th {
  border-right: 1px solid #e6e6e6;
  padding: 1px 0 0 7px;
  line-height: 27px;
  overflow: hidden;
  white-space: nowrap;
  display: flex;
  align-items: center;
}
.th:first-child { padding-left: 4px; }
.th-ico { padding-left: 9px; }
.th-note { padding-left: 6px; }
.th-star { padding-left: 7px; }
.th-ph { padding-left: 9px; }
.th-clip { border-right: 0; }
.c-navy { color: #0a0a8c; }
.c-red { color: #d81818; }
.c-green { color: #0a7d2a; }
.tr { height: 20px; color: #111; }
.td {
  height: 20px;
  line-height: 20px;
  font-size: 16.500px;
  white-space: nowrap;
  overflow: hidden;
  padding-left: 4px;
}
.td-fam { padding-left: 2px; }
.td-fam svg { margin-top: 2px; display: block; }
.td-chk { padding-left: 6px; }
.td-chk .chk { margin-top: 4px; }
.td-time { padding-left: 5px; font-size: 16px; line-height: 21px; }
.td-len { font-size: 16px; line-height: 21px; }
.td-name { font-size: 17px; line-height: 21px; }
.td-ph { color: #8c8c8c; }
.td-ph svg { display: block; margin-top: 4px; }
.selected { background: #0078d7; color: #d9ecfb; }
.selected .dark { color: #000; }
.selected .td-ph { color: #9a9a9a; }
.selected .chk { border-color: #7f8c99; }
.tscroll {
  flex: 1;
  background: #f0f0f0;
  display: flex;
  flex-direction: column;
  align-items: center;
  min-width: 0;
}
.refresh { width: 15px; height: 25px; margin-top: 2px; }
.tchev { color: #c4c4c4; margin-top: 7px; flex: none; }
.tchev-end { margin-top: auto; margin-bottom: 5px; }

.bottom { display: flex; align-items: flex-start; margin-top: 4px; height: 29px; }
.date-label { font-size: 17px; line-height: 27px; width: 42px; color: #111; flex: none; }
.date-input {
  width: 112px;
  height: 28px;
  border: 1px solid #0078d7;
  background: #fff;
  padding: 2px 0 0 2px;
  font-size: 17px;
  line-height: 21px;
  flex: none;
}
.sel { display: inline-block; background: #0078d7; color: #fff; letter-spacing: -.1px; }
.spin {
  width: 26px;
  height: 26px;
  margin: 1px 0 0 7px;
  border: 1px solid #adadad;
  background: #e1e1e1;
  display: flex;
  flex-direction: column;
  flex: none;
}
.spin span { height: 12px; display: flex; align-items: center; justify-content: center; flex: none; }
.spin span + span { border-top: 1px solid #adadad; height: 12px; }
.bb { height: 28px; margin-top: 2px; font-size: 17px; color: #111; }
.w147 { width: 147px; padding-left: 1px; }
.w103 { width: 103px; margin-left: 8px; padding-left: 1px; }
.w95 { width: 95px; }
.sq { width: 28px; margin-left: 2px; }
.w103 + .sq { margin-left: 8px; }
.w95 + .sq { margin-left: 4px; }
.small-txt { font-size: 13px; }
.plus-txt { font-size: 12px; font-weight: bold; }
.faded { opacity: .4; }
.lower-right .bottom { padding-right: 1px; }
.lower-left .bottom { padding-right: 1px; }
.hold-label { height: 17px; margin-top: 31px; font-size: 17px; line-height: 17px; color: #111; white-space: nowrap; }
.hold-box { height: 164px; background: #fff; border: 1px solid #7f8c99; }

.tnum { font: bold 14px "Liberation Sans", sans-serif; fill: #fff; text-anchor: middle; }
.cursor { position: absolute; left: 156px; top: 432px; }
```
